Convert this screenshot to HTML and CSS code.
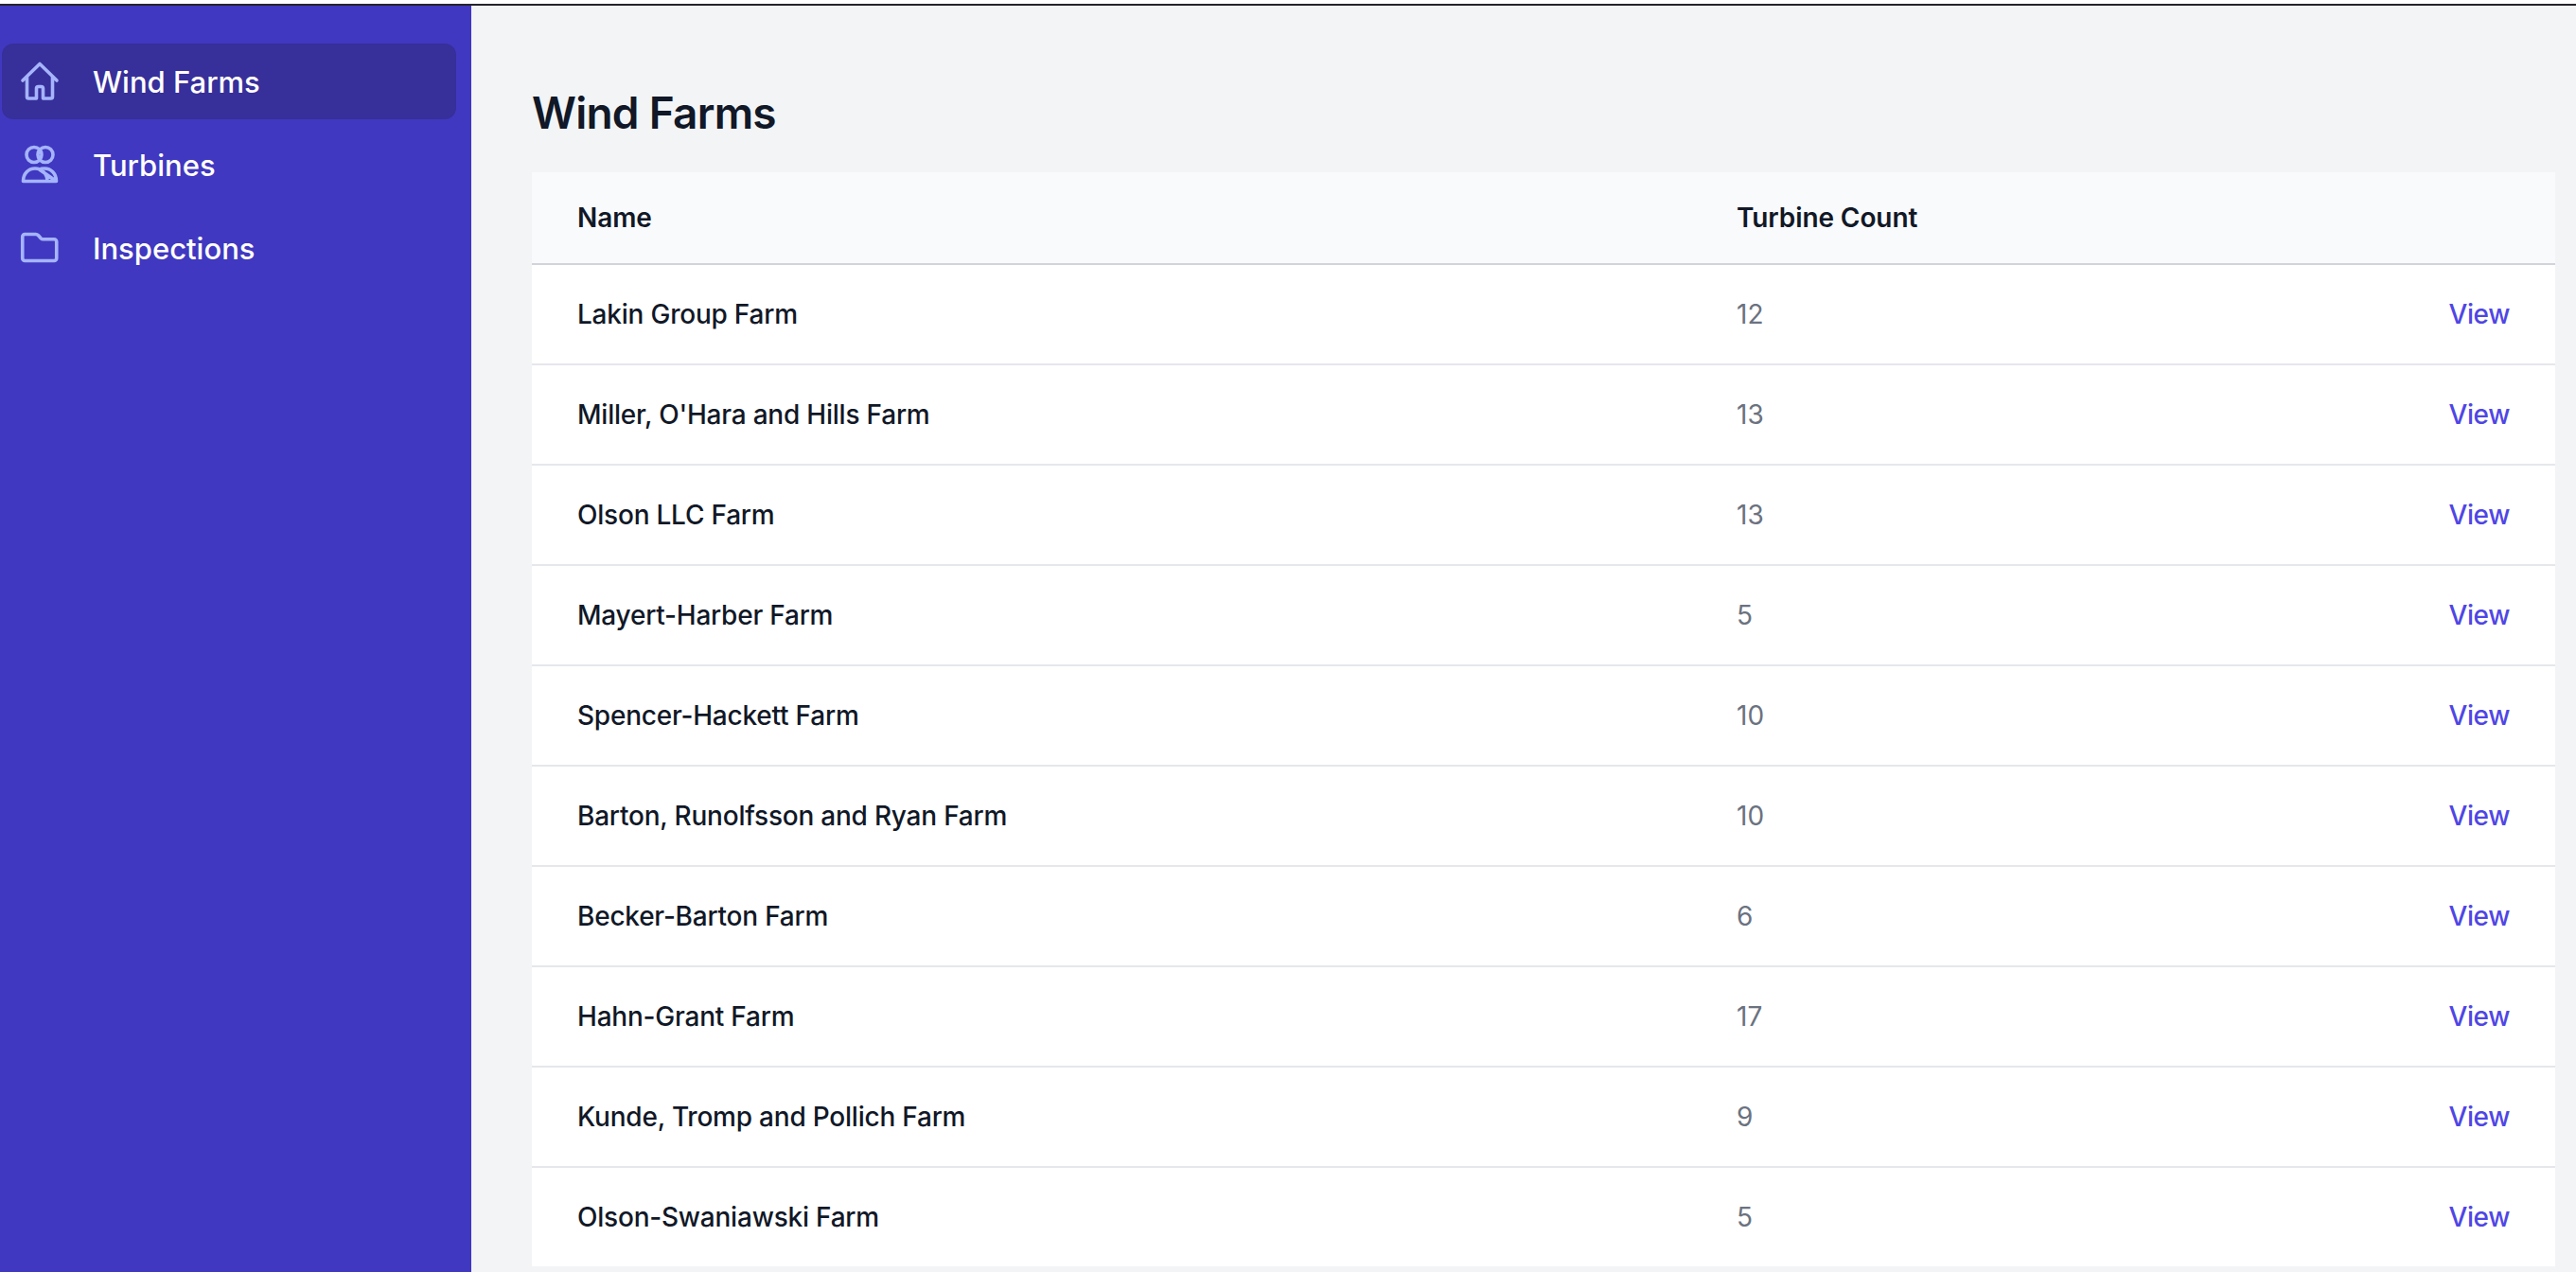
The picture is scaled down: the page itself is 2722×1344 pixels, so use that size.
FILE: index.html
```html
<!DOCTYPE html>
<html lang="en">
<head>
  <meta charset="UTF-8">
  <meta name="viewport" content="width=device-width, initial-scale=1.0">
  <title>Wind Farms</title>
  <link rel="stylesheet" href="styles.css">
</head>
<body>
  <div class="topline"></div>
  <div class="layout">
    <nav class="sidebar">
      <a class="nav-item active" href="#">
        <svg class="nav-icon" viewBox="0 0 48 48"><path d="M6 23 24 5.500 42 23M10.500 19v21.200a1.800 1.800 0 0 0 1.800 1.800h8.200V31.500a2 2 0 0 1 2-2h3a2 2 0 0 1 2 2V42h8.200a1.800 1.800 0 0 0 1.800-1.800V19"/></svg>
        Wind Farms
      </a>
      <a class="nav-item" href="#">
        <svg class="nav-icon" viewBox="0 0 48 48"><circle cx="18" cy="13.500" r="8"/><circle cx="30" cy="13.500" r="8"/><path d="M6.500 41.500C6.500 33.500 12 28 19 28s13 5.500 13 13.500M23.500 29c2-1 4-1 5.500-1 7 0 12.500 5.500 12.500 13.500ZM6.500 41.500h35"/></svg>
        Turbines
      </a>
      <a class="nav-item" href="#">
        <svg class="nav-icon" viewBox="0 0 48 48"><path d="M5.750 12a2.500 2.500 0 0 1 2.500-2.500h11.500c1.200 0 2 .5 2.800 1.300l2.600 2.900c.7.700 1.400 1.100 2.500 1.100h11.600a2.500 2.500 0 0 1 2.500 2.500v17.700a2.500 2.500 0 0 1-2.500 2.500H8.250a2.500 2.500 0 0 1-2.500-2.500Z"/></svg>
        Inspections
      </a>
    </nav>
    <main class="content">
      <h1>Wind Farms</h1>
      <table class="farm-table">
        <thead>
          <tr>
            <th class="col-name">Name</th>
            <th class="col-count">Turbine Count</th>
            <th></th>
          </tr>
        </thead>
        <tbody>
          <tr><td class="name">Lakin Group Farm</td><td class="count">12</td><td class="action"><a href="#">View</a></td></tr>
          <tr><td class="name">Miller, O'Hara and Hills Farm</td><td class="count">13</td><td class="action"><a href="#">View</a></td></tr>
          <tr><td class="name">Olson LLC Farm</td><td class="count">13</td><td class="action"><a href="#">View</a></td></tr>
          <tr><td class="name">Mayert-Harber Farm</td><td class="count">5</td><td class="action"><a href="#">View</a></td></tr>
          <tr><td class="name">Spencer-Hackett Farm</td><td class="count">10</td><td class="action"><a href="#">View</a></td></tr>
          <tr><td class="name">Barton, Runolfsson and Ryan Farm</td><td class="count">10</td><td class="action"><a href="#">View</a></td></tr>
          <tr><td class="name">Becker-Barton Farm</td><td class="count">6</td><td class="action"><a href="#">View</a></td></tr>
          <tr><td class="name">Hahn-Grant Farm</td><td class="count">17</td><td class="action"><a href="#">View</a></td></tr>
          <tr><td class="name">Kunde, Tromp and Pollich Farm</td><td class="count">9</td><td class="action"><a href="#">View</a></td></tr>
          <tr><td class="name">Olson-Swaniawski Farm</td><td class="count">5</td><td class="action"><a href="#">View</a></td></tr>
        </tbody>
      </table>
    </main>
  </div>
</body>
</html>
```

FILE: styles.css
```css
* {
  box-sizing: border-box;
}
html,
body {
  margin: 0;
  height: 100%;
  overflow: hidden;
}
body {
  display: flex;
  flex-direction: column;
  background-color: #ffffff;
  color: #111827;
  font-family: Inter, "Liberation Sans", sans-serif;
}
.topline {
  flex: none;
  height: 6px;
  border-top: 4px solid #ffffff;
  background-color: #24242c;
}
.layout {
  flex: 1;
  display: flex;
  min-height: 0;
}
.sidebar {
  flex: none;
  width: 498px;
  padding: 40px 16px 0 2px;
  display: flex;
  flex-direction: column;
  gap: 8px;
  background-color: #4038c0;
}
.nav-item {
  display: flex;
  align-items: center;
  gap: 32px;
  height: 80px;
  padding-left: 16px;
  border-radius: 12px;
  color: #ffffff;
  font-size: 31px;
  font-weight: 550;
  text-decoration: none;
}
.nav-item.active {
  background-color: #372f9a;
}
.nav-icon {
  flex: none;
  width: 48px;
  height: 48px;
  fill: none;
  stroke: #a5b4fc;
  stroke-width: 3.6;
  stroke-linecap: round;
  stroke-linejoin: round;
}
.content {
  flex: 1;
  min-width: 0;
  padding: 81px 22px 0 64px;
  background-color: #f3f4f6;
}
h1 {
  margin: 0 0 31px;
  font-size: 46px;
  line-height: 64px;
  font-weight: 600;
  letter-spacing: -0.75px;
}
.farm-table {
  width: 100%;
  table-layout: fixed;
  border-collapse: collapse;
  background-color: #ffffff;
  font-size: 28px;
  line-height: 40px;
}
.farm-table th {
  padding: 28px 48px;
  background-color: #f9fafb;
  border-bottom: 2px solid #d1d5db;
  font-weight: 600;
  text-align: left;
  letter-spacing: -0.1px;
}
.col-name {
  width: 1225px;
}
.col-count {
  width: 600px;
}
.farm-table td {
  padding: 32px 48px;
  border-bottom: 2px solid #e5e7eb;
}
.farm-table tr:last-child td {
  border-bottom: none;
}
.name {
  font-weight: 500;
  letter-spacing: -0.22px;
}
.count {
  color: #6b7280;
}
.action {
  text-align: right;
}
.action a {
  color: #4f46e5;
  font-weight: 550;
  letter-spacing: -0.4px;
  text-decoration: none;
}
```
